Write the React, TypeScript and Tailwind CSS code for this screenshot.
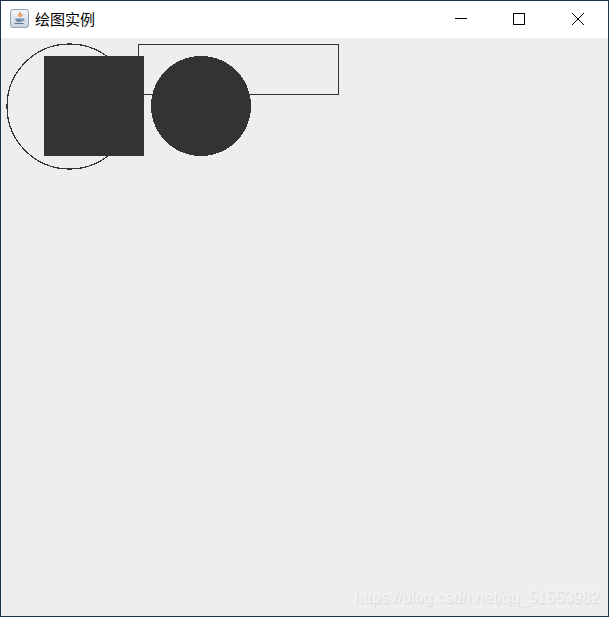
function JavaIcon() {
  return (
    <div className="flex size-[19px] items-center justify-center rounded-[3px] border border-[#8fa3b8] bg-gradient-to-b from-[#f4f6f9] to-[#c9d3de]">
      <svg width="15" height="15" viewBox="0 0 15 15" fill="none">
        <path d="M8 1c1 1.500-2 2.500-1 4.500M10 3c0 1.500-2 1.500-1.500 3" stroke="#e8791c" strokeWidth="1.300" />
        <path d="M3.500 7.500h7v1.500c0 1.500-1.500 2-3.500 2s-3.500-.5-3.500-2z" fill="#6d8aa6" />
        <path d="M10.500 8h1.500v1.500h-1.500" stroke="#5a7590" strokeWidth="0.800" />
        <path d="M2.500 12.500h9" stroke="#5a7590" strokeWidth="1" />
      </svg>
    </div>
  );
}

function WindowButtons() {
  return (
    <div className="ml-auto flex items-center pr-[1px]">
      <div className="flex w-[58px] justify-center">
        <svg width="12" height="12" viewBox="0 0 12 12" shapeRendering="crispEdges">
          <path d="M0 5.500h12" stroke="#000" />
        </svg>
      </div>
      <div className="flex w-[58px] justify-center">
        <svg width="12" height="12" viewBox="0 0 12 12" shapeRendering="crispEdges">
          <rect x="0.500" y="0.500" width="11" height="11" fill="none" stroke="#000" />
        </svg>
      </div>
      <div className="flex w-[59px] justify-center">
        <svg width="12" height="12" viewBox="0 0 12 12">
          <path d="M0 0l12 12M12 0L0 12" stroke="#000" />
        </svg>
      </div>
    </div>
  );
}

function TitleBar() {
  return (
    <div className="flex h-[37px] shrink-0 items-center bg-white pb-[2px]">
      <div className="ml-[9px] flex items-center gap-[6px]">
        <JavaIcon />
        <span className="text-[15px] leading-none text-black [font-family:'Noto_Sans_CJK_SC',sans-serif]">
          绘图实例
        </span>
      </div>
      <WindowButtons />
    </div>
  );
}

export default function App() {
  return (
    <div className="relative flex h-[617px] w-[609px] flex-col overflow-hidden border border-[#1f3350] bg-[#eeeeee]">
      <TitleBar />
      <div className="relative flex-1">
        {/* the drawn shapes, in page coordinates minus the window chrome */}
        <svg
          width="607"
          height="578"
          viewBox="1 38 607 578"
          className="block"
          shapeRendering="crispEdges"
        >
          <circle cx="69.500" cy="106.500" r="62.500" fill="none" stroke="#333333" strokeWidth="1.200" />
          <rect x="138.500" y="44.500" width="200" height="50" fill="none" stroke="#333333" strokeWidth="1" />
          <rect x="44" y="56" width="100" height="100" fill="#333333" />
          <circle cx="201" cy="106" r="50" fill="#333333" />
        </svg>
        <span className="absolute bottom-[10px] right-[8px] text-[16px] leading-none text-[#f4f4f4] [font-family:'Liberation_Sans',sans-serif] [text-shadow:1px_1px_1px_#d6d6d6]">
          https://blog.csdn.net/qq_51553982
        </span>
      </div>
    </div>
  );
}
